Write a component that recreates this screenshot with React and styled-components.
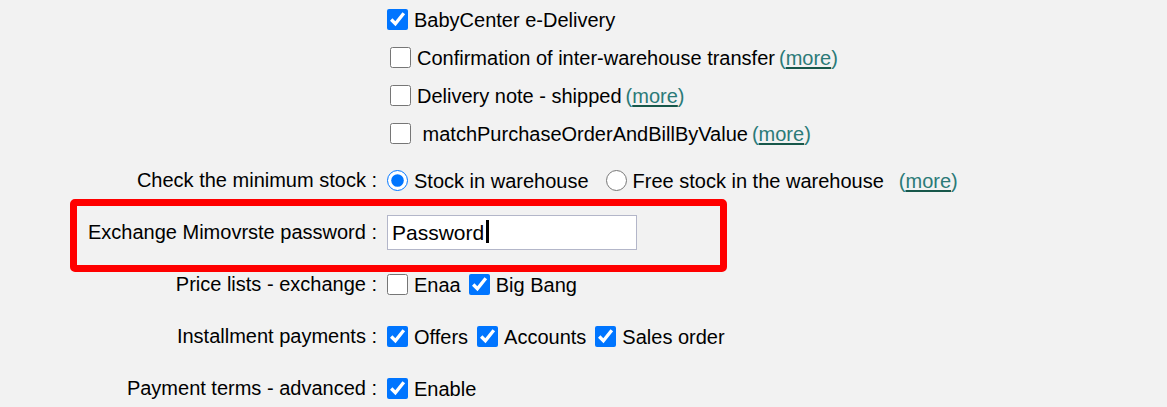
import React from "react";
import styled, { createGlobalStyle } from "styled-components";

const Global = createGlobalStyle`
  html, body { margin: 0; padding: 0; background: #f2f2f2; }
  body { font-family: "Liberation Sans", Arial, sans-serif; font-size: 20px; color: #000; }
`;

const Page = styled.div`
  display: flex;
  flex-direction: column;
  width: 1167px;
`;

const Row = styled.div`
  position: relative;
  display: grid;
  grid-template-columns: 377px auto;
  column-gap: 10px;
  align-items: center;
  height: ${(p) => p.$h}px;
  margin-top: ${(p) => p.$mt || 0}px;
`;

const Label = styled.div`
  text-align: right;
  white-space: nowrap;
`;

const Options = styled.div`
  display: flex;
  align-items: center;
  gap: ${(p) => p.$gap ?? 9}px;
  padding-left: ${(p) => p.$indent || 0}px;
  white-space: nowrap;
`;

const Option = styled.label`
  display: flex;
  align-items: center;
  gap: 6px;
`;

const Box = styled.input`
  width: 21px;
  height: 21px;
  margin: 0;
  flex: none;
  accent-color: #0075ff;
`;

const OptionText = styled.span`
  padding-top: 3px;
`;

const More = styled.span`
  color: #2b7a78;
  margin-left: ${(p) => p.$ml || 0}px;
  padding-top: 3px;
`;

const MoreLink = styled.a`
  color: #2b7a78;
  text-decoration: underline;
  text-decoration-color: #17574a;
  text-decoration-thickness: 2px;
  text-underline-offset: 2px;
`;

const Highlight = styled.div`
  position: absolute;
  left: 70px;
  top: -7px;
  width: 657px;
  height: 73px;
  box-sizing: border-box;
  border: 7px solid #ff0000;
  border-radius: 5px;
  pointer-events: none;
`;

const InputWrap = styled.div`
  position: relative;
  width: 250px;
  height: 35px;
`;

const TextInput = styled.input`
  box-sizing: border-box;
  width: 250px;
  height: 35px;
  margin: 0;
  padding: 1px 4px 0;
  border: 1px solid #b3b6c9;
  border-radius: 0;
  background: #fff;
  font-family: "Liberation Sans", Arial, sans-serif;
  font-size: 21px;
  color: #000;
  outline: none;
`;

const Caret = styled.span`
  position: absolute;
  left: 99px;
  top: 5px;
  width: 3px;
  height: 23px;
  background: #000;
`;

function MoreNote({ ml }) {
  return (
    <More $ml={ml}>
      (<MoreLink href="#">more</MoreLink>)
    </More>
  );
}

function Check({ checked, children }) {
  return (
    <Option>
      <Box type="checkbox" defaultChecked={checked} />
      <OptionText>{children}</OptionText>
    </Option>
  );
}

export default function App() {
  return (
    <>
      <Global />
      <Page>
        <Row $h={38}>
          <Label />
          <Options>
            <Check checked>BabyCenter e-Delivery</Check>
          </Options>
        </Row>
        <Row $h={38}>
          <Label />
          <Options $indent={3} $gap={0}>
            <Check>Confirmation of inter-warehouse transfer</Check>
            <MoreNote ml={4} />
          </Options>
        </Row>
        <Row $h={38}>
          <Label />
          <Options $indent={3} $gap={0}>
            <Check>Delivery note - shipped</Check>
            <MoreNote ml={4} />
          </Options>
        </Row>
        <Row $h={38}>
          <Label />
          <Options $indent={3} $gap={0}>
            <Check>{"\u00a0matchPurchaseOrderAndBillByValue"}</Check>
            <MoreNote ml={4} />
          </Options>
        </Row>

        <Row $h={52} $mt={2}>
          <Label>Check the minimum stock :</Label>
          <Options $gap={17}>
            <Option>
              <Box type="radio" name="stock" defaultChecked />
              <OptionText>Stock in warehouse</OptionText>
            </Option>
            <Option>
              <Box type="radio" name="stock" />
              <OptionText>Free stock in the warehouse</OptionText>
            </Option>
            <MoreNote ml={-2} />
          </Options>
        </Row>

        <Row $h={52}>
          <Highlight />
          <Label>Exchange Mimovrste password :</Label>
          <InputWrap>
            <TextInput type="text" defaultValue="Password" />
            <Caret />
          </InputWrap>
        </Row>

        <Row $h={52}>
          <Label>Price lists - exchange :</Label>
          <Options $gap={8}>
            <Check>Enaa</Check>
            <Check checked>Big Bang</Check>
          </Options>
        </Row>

        <Row $h={52}>
          <Label>Installment payments :</Label>
          <Options $gap={9}>
            <Check checked>Offers</Check>
            <Check checked>Accounts</Check>
            <Check checked>Sales order</Check>
          </Options>
        </Row>

        <Row $h={52}>
          <Label>Payment terms - advanced :</Label>
          <Options>
            <Check checked>Enable</Check>
          </Options>
        </Row>
      </Page>
    </>
  );
}
